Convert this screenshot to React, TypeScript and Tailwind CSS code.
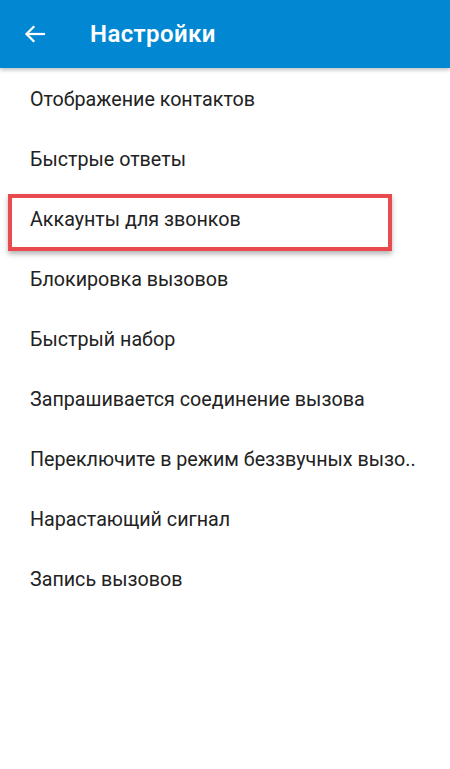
import React from 'react';

const items = [
  'Отображение контактов',
  'Быстрые ответы',
  'Аккаунты для звонков',
  'Блокировка вызовов',
  'Быстрый набор',
  'Запрашивается соединение вызова',
  'Переключите в режим беззвучных вызо..',
  'Нарастающий сигнал',
  'Запись вызовов',
];

export default function App() {
  return (
    <div className="w-[450px] h-[769px] bg-white font-['Roboto',sans-serif] overflow-hidden">
      <header className="relative z-10 h-[68px] bg-[#0288d3] flex items-center shadow-[0_2px_4px_rgba(0,0,0,0.25)]">
        <svg
          className="ml-[24px]"
          width="22"
          height="24"
          viewBox="0 0 22 24"
          fill="none"
          stroke="white"
          strokeWidth="2.2"
          strokeLinecap="square"
        >
          <path d="M20 12H3" />
          <path d="M9.5 5l-7 7 7 7" />
        </svg>
        <h1 className="ml-[44px] text-white text-[24px] font-semibold tracking-[0.4px] leading-none">Настройки</h1>
      </header>
      <ul className="pt-[2px]">
        {items.map((text, i) => (
          <li key={text} className="relative h-[60px] flex items-center pl-[30px] text-[19.7px] text-[#222]">
            {text}
            {i === 2 && (
              <div className="absolute top-[4px] left-[8px] w-[384px] h-[57px] border-4 border-[#e84a4f] shadow-[0_3px_5px_rgba(0,0,0,0.3)]" />
            )}
          </li>
        ))}
      </ul>
    </div>
  );
}
